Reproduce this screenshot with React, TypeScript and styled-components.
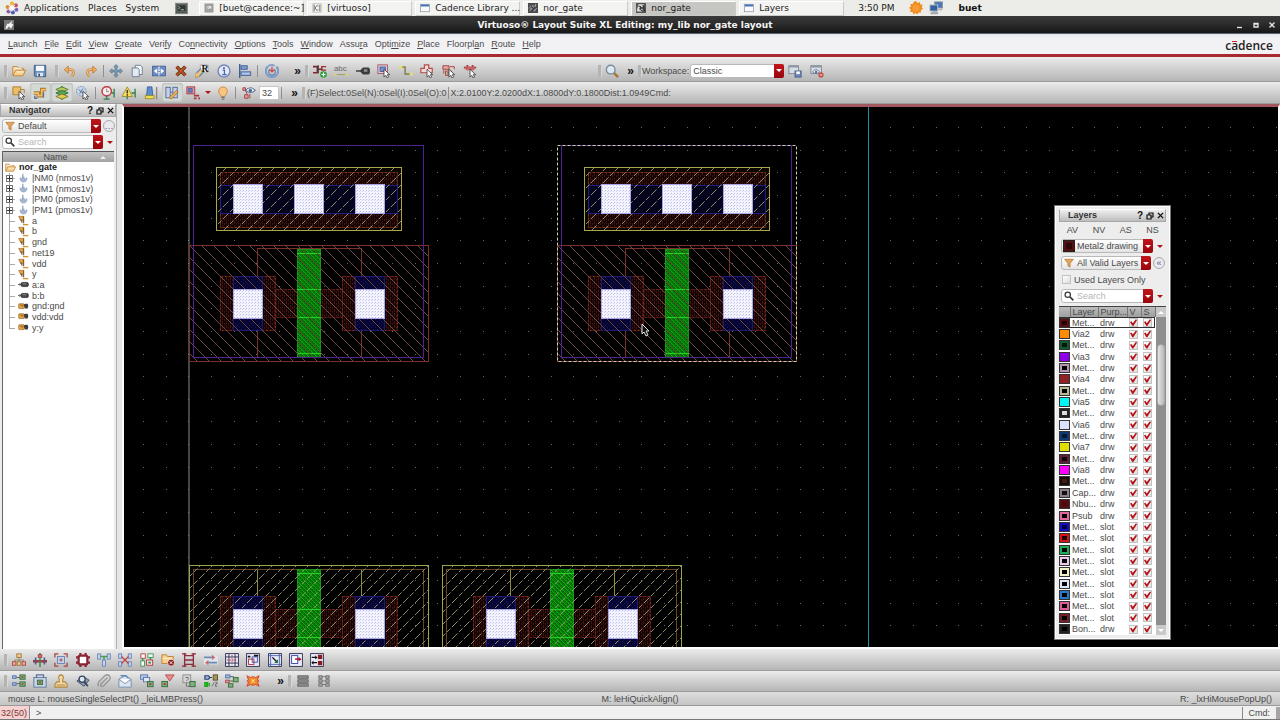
import React from 'react';
import styled, { createGlobalStyle, css } from 'styled-components';

const GlobalStyle = createGlobalStyle`
  * { box-sizing: border-box; }
  body {
    margin: 0;
    background: #e6e6e6;
    color: #4a4a4a;
    font-family: 'Liberation Sans', Arial, sans-serif;
    font-size: 9px;
    line-height: 12px;
    overflow: hidden;
  }
  button, input, select {
    font: inherit;
    color: inherit;
    margin: 0;
    padding: 0;
    border: 0;
    background: none;
  }
`;

/* ---------- icons, drawn on a 16 x 16 grid ---------- */

const chip = (x: number, y: number, w: number, h: number, fill: string, stroke: string) => (
  <rect x={x} y={y} width={w} height={h} fill={fill} stroke={stroke} strokeWidth={1} />
);
const pointer = <path d="M8 6v9l2-2 1.5 3 1.8-1-1.5-2.8H14.5z" fill="#fff" stroke="#333" strokeWidth={0.9} />;
const frame = chip(0.7, 0.7, 14.6, 14.6, '#e9ecf8', '#26264a');

const icons: Record<string, React.ReactNode> = {
  apps: (
    <>
      <circle cx={8} cy={3} r={2.3} fill="#e3b62e" /><circle cx={12.5} cy={5} r={2.3} fill="#c8556d" />
      <circle cx={13} cy={10} r={2.3} fill="#7a62b8" /><circle cx={9} cy={13} r={2.3} fill="#4a5fb0" />
      <circle cx={4} cy={12} r={2.3} fill="#8c5aa8" /><circle cx={3} cy={7} r={2.3} fill="#dd8a35" />
      <path d="M8 4v8M4 8h8M5 5l6 6M11 5l-6 6" stroke="#fff" strokeWidth={1} />
    </>
  ),
  terminal: (
    <>
      {chip(0.5, 1.5, 15, 13, '#4d5450', '#8a8f8a')}
      {chip(2.5, 3.5, 11, 8, '#2c3531', '#6b736e')}
      <path d="M4 5l2 2-2 2M7 9.5h4" fill="none" stroke="#d5dcd6" />
    </>
  ),
  terminalPale: (
    <>
      {chip(1.5, 1.5, 13, 13, '#a4a6a3', '#888')}
      {chip(3.5, 4.5, 9, 6, '#e6e6e2', '#8f8f8f')}
      <path d="M5 6l2 1.5-2 1.5M8 9.5h3" fill="none" stroke="#777" />
    </>
  ),
  script: (
    <>
      {chip(1.5, 1.5, 13, 13, '#fafafa', '#9a9a9a')}
      <path d="M10.5 5C7 3.5 5.5 6 5.5 8s1.5 4.5 5 3M3.5 3v10M12.5 3v10" fill="none" stroke="#444" strokeWidth={1.2} />
    </>
  ),
  win: (
    <>
      {chip(1, 2, 14, 12, '#f8fafc', '#7f8790')}
      <rect x={1.5} y={2.5} width={13} height={3} fill="#3d72b8" />
    </>
  ),
  gate: (
    <>
      <rect width={16} height={16} fill="#4b4b4b" />
      <path d="M2 13L13 2M3 4l9 9M1 8h5l2-5M9 14l5-6M12 2v4M4 11h5" stroke="#a9a9a9" strokeWidth={1.4} fill="none" />
      <path d="M5 6l4 3-3 4" stroke="#171717" strokeWidth={1.6} fill="none" />
    </>
  ),
  gateLight: (
    <>
      <rect width={16} height={16} fill="#555" />
      <path d="M1 13L4 2h9l-2 4-5 1v3h5l-2 4z" fill="#dcdcdc" />
      <path d="M4 5l4 1-2 4 4 3M11 3l3 10" stroke="#222" strokeWidth={1.5} fill="none" />
    </>
  ),
  sun: (
    <>
      <path d="M8 0l1.8 2.3L12.5 1l.4 2.9 2.8.5-1.200 2.600L16 9l-2.500 1.400.4 2.800h-2.900L9.500 15.500 7.500 13.800 5 15.400 4.200 12.700 1.300 12.500 2 9.700 0 7.800 2.300 6.300 1.600 3.500H4.500L5.300.9z" fill="#f08b1d" />
      <circle cx={8} cy={8} r={4} fill="#f79c33" />
    </>
  ),
  net: (
    <>
      {chip(6.5, 1, 9, 7, '#4a76b5', '#8f96a0')}{chip(1, 4.5, 9, 7, '#33619f', '#c2c8cf')}
      <path d="M2 14.5h8l-1-2H4zM11 10h4" stroke="#8b8f96" fill="#c9ccd1" />
    </>
  ),
  folder: (
    <>
      <path d="M1 13V3h5l1.5 2H13v2" fill="#fbe3b8" stroke="#b97f35" />
      <path d="M1 13.5L4 7h11.5l-3 6.5z" fill="#f9cf8c" stroke="#b97f35" />
      <path d="M4 5h7M5 9h8" stroke="#fff8ea" />
    </>
  ),
  save: (
    <>
      <path d="M1.5 1.5h13v13h-12l-1-1z" fill="#6d92bf" stroke="#38587f" />
      <rect x={3.5} y={2} width={9} height={6} fill="#f5f8fb" /><rect x={4.5} y={10} width={7} height={4} fill="#dfe6ee" />
      <rect x={6} y={11} width={2} height={3} fill="#38587f" />
    </>
  ),
  undo: (
    <>
      <path d="M4 6.5h5c4 0 4 6 0 7" fill="none" stroke="#c07a33" strokeWidth={2.8} />
      <path d="M4 6.5h5c4 0 4 6 0 7" fill="none" stroke="#f5bd7b" strokeWidth={1.4} />
      <path d="M6 2.5v8l-4.5-4z" fill="#f2b069" stroke="#c07a33" />
    </>
  ),
  redo: (
    <>
      <path d="M12 6.5H7c-4 0-4 6 0 7" fill="none" stroke="#c07a33" strokeWidth={2.8} />
      <path d="M12 6.5H7c-4 0-4 6 0 7" fill="none" stroke="#f5bd7b" strokeWidth={1.4} />
      <path d="M10 2.5v8l4.5-4z" fill="#f2b069" stroke="#c07a33" />
    </>
  ),
  move: (
    <path d="M8 .5l2.5 3H9V7h3.500V5.500l3 2.500-3 2.500V9H9v3.500h1.500L8 15.500l-2.500-3H7V9H3.500v1.500L.5 8l3-2.500V7H7V3.500H5.500z" fill="#7f9fb6" stroke="#466a86" strokeWidth={0.7} />
  ),
  copy: (
    <>
      <path d="M6 1.5h6l2 2V12H6z" fill="#f3f6fa" stroke="#66778c" /><path d="M2.5 4.5H9l1.5 2v8h-8z" fill="#e4eaf2" stroke="#66778c" />
    </>
  ),
  stretch: (
    <>
      {chip(0.7, 2.5, 14.6, 11, '#6d8cc0', '#3f5f98')}
      <path d="M2 8l4-3v6zM14 8l-4-3v6z" fill="#fff" /><path d="M8 3v10" stroke="#dbe5f6" strokeWidth={2} strokeDasharray="2 1" />
    </>
  ),
  del: (
    <>
      <path d="M3 3l10 10M13 3L3 13" stroke="#5f240c" strokeWidth={4} /><path d="M3 3l10 10M13 3L3 13" stroke="#c45a22" strokeWidth={1.8} />
    </>
  ),
  prop: (
    <>
      <path d="M6 1h9v9H6z" fill="#f4f4f4" stroke="#aaa" />
      <path d="M0 12l6-6 3 3-5 6H0z" fill="#efc274" stroke="#a47834" strokeWidth={0.7} />
      <path d="M2 10l5-5M5 14l5-5" stroke="#5d8bc0" strokeWidth={1.5} />
      <text x={7.5} y={9.5} fontSize={11} fontWeight={700} fontFamily="Liberation Serif, serif" fill="#111">R</text>
    </>
  ),
  info: (
    <>
      <circle cx={8} cy={8} r={6.8} fill="#e3e9f6" stroke="#7388bb" strokeWidth={1.6} />
      <path d="M6.5 7h2v5M6 12.2h5" stroke="#5066a8" strokeWidth={1.4} fill="none" /><circle cx={8} cy={4.5} r={1.2} fill="#5066a8" />
    </>
  ),
  align: (
    <>
      <path d="M2 0v16" stroke="#32538f" strokeWidth={1.5} />{chip(3.5, 2, 7, 4, '#7f9dcf', '#3a5a99')}{chip(3.5, 9, 11, 4, '#a9c0e4', '#3a5a99')}
    </>
  ),
  spin: (
    <>
      <path d="M3 3a7 7 0 1 0 10 0" fill="none" stroke="#7d9fcb" strokeWidth={2.5} />
      <path d="M3 3a7 7 0 0 1 8-1" fill="none" stroke="#7d9fcb" strokeWidth={2} />
      <path d="M5.5 6a3.800 3.800 0 1 0 5 0" fill="none" stroke="#5a7cb5" strokeWidth={1.3} />
      <path d="M8 3v6M10.5 6.5L8 9 5.5 6.5" fill="none" stroke="#d0423b" strokeWidth={1.4} />
    </>
  ),
  wire: (
    <>
      <path d="M0 3h5v7H0M5 6h6" fill="none" stroke="#7c2a2c" strokeWidth={1.8} />
      <path d="M6 1.5v9" stroke="#444" strokeWidth={1.5} /><path d="M15 3h-5v4h5" fill="none" stroke="#9c3434" strokeWidth={1.6} />
      <circle cx={12} cy={12} r={3.8} fill="#2f9e3e" /><path d="M12 9.8v4.4M9.8 12h4.4" stroke="#fff" strokeWidth={1.3} />
    </>
  ),
  abc: (
    <>
      <text x={0} y={8} fontSize={9} fontFamily="Liberation Sans, sans-serif" fill="#666">abc</text>
      <path d="M0 12h15" stroke="#a09a62" /><path d="M0 11h3v2H0zM13 11h3v2h-3z" fill="#dcd56a" />
    </>
  ),
  pin: (
    <>
      <path d="M0 8h5" stroke="#222" strokeWidth={1.4} /><path d="M4 8l4-4h6q2 0 2 4t-2 4H8z" fill="#3c3c3c" /><rect x={9} y={6} width={4} height={3} fill="#8b8b8b" />
    </>
  ),
  select: (
    <>
      {chip(1, 1, 11, 10, '#c9d0e8', '#b64a50')}{chip(3.5, 3.5, 6, 5, '#7a8fc9', '#44589a')}{pointer}
    </>
  ),
  path: (
    <>
      <path d="M2 3.5h5v8h6" fill="none" stroke="#8c8a5e" strokeWidth={2} /><path d="M0 2h4v3H0zM12 10h4v3h-4z" fill="#e2dc72" />
    </>
  ),
  shape: (
    <>
      <path d="M5 1h5v4h4v5H1V5h4z" fill="#f5d9d9" stroke="#b34a4a" strokeWidth={1.3} />{pointer}
    </>
  ),
  group: (
    <>
      <path d="M1 2h7v4H1zM4 8h7v5H4z" fill="#e7a8a8" stroke="#a43a3a" /><path d="M9 3h5v3M2 7v4" stroke="#a43a3a" fill="none" />
      <rect x={6} y={9} width={3} height={3} fill="#3c9a4a" />{pointer}
    </>
  ),
  cluster: (
    <>
      <path d="M1 4h14M5 1v6M11 1v6" stroke="#a43a3a" strokeWidth={2} /><path d="M3 3h10v4H3z" fill="#c96262" />{pointer}
    </>
  ),
  zoom: (
    <>
      <path d="M10 10l5 5" stroke="#a67a3c" strokeWidth={3} /><circle cx={6.5} cy={6.5} r={5} fill="#dbe9f7" stroke="#7f8b98" strokeWidth={1.6} />
    </>
  ),
  wsSave: (
    <>
      {chip(1, 2, 11, 9, '#d8dde3', '#7b838c')}<rect x={1} y={2} width={11} height={2} fill="#8d98a6" />{chip(8, 8, 7, 7, '#7088b8', '#445c8c')}<rect x={9.5} y={8.5} width={4} height={3} fill="#fff" />
    </>
  ),
  wsDel: (
    <>
      {chip(1, 2, 12, 9, '#d8dde3', '#7b838c')}<rect x={1} y={2} width={12} height={2} fill="#8d98a6" />
      <path d="M3 9q4-5 8 0q-4 4-8 0z" fill="#fff" stroke="#53698e" /><circle cx={7} cy={9} r={1.4} fill="#53698e" />
      <circle cx={12.5} cy={12.5} r={3} fill="#c64a44" /><path d="M11 12.5h3" stroke="#fff" />
    </>
  ),
  pick: (
    <>
      <path d="M1 1h9v9H1z" fill="#eebd66" stroke="#a97a2c" /><path d="M10 4h4v4" fill="none" stroke="#a97a2c" />{pointer}
    </>
  ),
  chain: (
    <>
      <path d="M1 8h5v3h4V4h5" fill="none" stroke="#a9752c" strokeWidth={4} /><path d="M1 8h5v3h4V4h5" fill="none" stroke="#f2bf66" strokeWidth={2} />
      <path d="M2 11v3h3M12 7v6" stroke="#5c6fa0" fill="none" strokeWidth={1.5} />
    </>
  ),
  stack: (
    <>
      <path d="M8 0v16" stroke="#2b7c3a" strokeWidth={1.5} /><path d="M1 4l7-3 7 3-7 3z" fill="#b5c85b" stroke="#51722a" />
      <path d="M1 8l7-3 7 3-7 3z" fill="#58a55c" stroke="#2c6a34" /><path d="M1 12l7-3 7 3-7 3z" fill="#d8ca57" stroke="#7c702a" />
    </>
  ),
  dots: (
    <>
      <circle cx={6} cy={6} r={5.5} fill="#c9d6e8" stroke="#7088ac" strokeDasharray="2 1" /><path d="M3 4l6 5M8 3L4 9" stroke="#4f6c9c" />{pointer}
    </>
  ),
  probe: (
    <>
      <circle cx={6.5} cy={6} r={5.3} fill="#fbeeee" stroke="#bf4348" strokeWidth={1.8} /><path d="M6.5 3v3.5H9" stroke="#777" fill="none" />
      <path d="M15 3v10M12 8h3M6.5 11v4M3 15h7" stroke="#2d8144" strokeWidth={1.5} fill="none" />
    </>
  ),
  warn: (
    <>
      <path d="M6 1l6 11H0z" fill="#f7dd57" stroke="#a08a27" /><path d="M6 4.5v4M6 9.5V11" stroke="#222" strokeWidth={1.4} />
      <path d="M15 3v10M11 8h4M6 12v3" stroke="#2d8144" strokeWidth={1.5} fill="none" />
    </>
  ),
  marker: (
    <>
      <path d="M4 1h5l1 10H3z" fill="#5b8fd0" stroke="#355e96" /><rect x={1.5} y={11} width={10} height={3.5} fill="#f1df55" stroke="#9c8c28" />
      <path d="M14.5 1v14" stroke="#777" strokeWidth={1.2} />
    </>
  ),
  edit: (
    <>
      {chip(1, 1.5, 5, 12, '#c6cfe8', '#4f6299')}{chip(9, 1.5, 5, 12, '#c6cfe8', '#4f6299')}<path d="M6 7h3" stroke="#4f6299" />
      <path d="M5 13l8-8 2 2-8 8z" fill="#efb354" stroke="#8e6420" strokeWidth={0.8} />
    </>
  ),
  part: (
    <>
      {chip(1, 1, 9, 8, '#d99aa0', '#a5373d')}{chip(3, 3, 4, 4, '#6f86c0', '#44589a')}<path d="M9 11h6M9 14h3M14 14h2" stroke="#a5373d" strokeWidth={2} />
    </>
  ),
  bulb: (
    <>
      <path d="M8 1a5 5 0 0 0-3 9l1 2h4l1-2a5 5 0 0 0-3-9z" fill="#f9c583" stroke="#c8873b" /><path d="M6 13h4M6.5 15h3" stroke="#777" strokeWidth={1.3} />
    </>
  ),
  eye: (
    <>
      <path d="M4 5q6-6 11 0q-5 5-11 0z" fill="#fff" stroke="#5a6f96" strokeWidth={1.2} /><circle cx={9.5} cy={5} r={2} fill="#4a6a9c" />
      <path d="M1 2h3v3H1zM3 10h4v4H3z" fill="#e3a1a1" stroke="#a43a3a" /><path d="M4 5l2 5M9 9v5" stroke="#a43a3a" />
    </>
  ),
  filter: <path d="M1 2h14L9.800 8.500V14.500L6.200 12.500V8.500z" fill="#e6a45c" stroke="#a76d2d" />,
  search: (
    <>
      <circle cx={6} cy={6} r={4.3} fill="none" stroke="#3a3a3a" strokeWidth={2} /><path d="M9.5 9.5L15 15" stroke="#3a3a3a" strokeWidth={2.6} />
    </>
  ),
  inst: (
    <>
      <path d="M7 1v6" stroke="#8095b5" strokeWidth={1.6} /><path d="M3 7q0 6 5 6t5-6q-2 2-4 2V6H6v3q-2 0-3-2z" fill="#a9bbd4" stroke="#8095b5" />
    </>
  ),
  netItem: (
    <>
      <path d="M1 2h7v6H4z" fill="#e8a748" stroke="#9c6820" /><path d="M8 2v10" stroke="#8c5f23" strokeWidth={2} /><path d="M4 6l2 5" stroke="#555" strokeWidth={1.5} />
      <path d="M7 14h8" stroke="#c79a3c" strokeWidth={2} />
    </>
  ),
  pinItem: (
    <>
      <path d="M0 8h4M2 6l2 2-2 2" stroke="#333" fill="none" /><rect x={4.5} y={5} width={10.5} height={6} rx={2} fill="#4a4a4a" stroke="#222" /><path d="M7 7h5" stroke="#999" />
    </>
  ),
  pinNet: (
    <>
      <rect x={1} y={4} width={8} height={7} rx={1} fill="#e8a748" stroke="#9c6820" /><path d="M3 6h3v3" stroke="#7a4f18" fill="none" />
      <path d="M8 5l3-1h3q2 3 0 7h-4z" fill="#3c3c3c" />
    </>
  ),
  tree: (
    <>
      <path d="M8 4v4M3 12V8h10v4M8 8v4" stroke="#8a8063" fill="none" />{chip(5.5, 1, 5, 4, '#f0cf97', '#a06f32')}
      {chip(0.5, 10, 4, 4, '#f0a8a0', '#a14a3f')}{chip(6, 10, 4, 4, '#f0cf97', '#a06f32')}{chip(11.5, 10, 4, 4, '#f0a8a0', '#a14a3f')}
    </>
  ),
  rail: (
    <>
      <path d="M0 9.5h16" stroke="#a8353c" strokeWidth={3} /><path d="M8 0v16" stroke="#3b8f4c" strokeWidth={1.8} /><path d="M3 5v8M13 5v8" stroke="#465b9e" strokeWidth={1.8} />{chip(6, 2, 4, 3, '#dc7a7a', '#a8353c')}
    </>
  ),
  target: (
    <>
      <path d="M1 5V1h4M11 1h4v4M15 11v4h-4M5 15H1v-4" fill="none" stroke="#a8454a" strokeWidth={1.5} />{chip(4, 4, 8, 8, '#c4d3ea', '#6480b5')}<path d="M6 8h4M8 6v4" stroke="#a8454a" />
    </>
  ),
  ring: (
    <>
      <rect x={3} y={3} width={10} height={10} rx={2} fill="#fff" stroke="#8d2436" strokeWidth={2.6} />
      <path d="M5 0v3M11 0v3M5 13v3M11 13v3M0 5h3M0 11h3M13 5h3M13 11h3" stroke="#8d2436" strokeWidth={2.5} />
    </>
  ),
  branch: (
    <>
      {chip(0.7, 1, 3.5, 6, '#c3d4ee', '#6883b4')}{chip(11.7, 1, 3.5, 6, '#c3d4ee', '#6883b4')}<path d="M4 4h8M8 4v4" stroke="#4a9a5a" strokeWidth={1.8} />{chip(6.2, 8, 3.5, 7, '#c3d4ee', '#6883b4')}
    </>
  ),
  cross: (
    <>
      {chip(0.7, 1, 3.5, 5, '#c3d4ee', '#6883b4')}{chip(11.7, 1, 3.5, 5, '#c3d4ee', '#6883b4')}{chip(0.7, 10, 3.5, 5, '#c3d4ee', '#6883b4')}{chip(11.7, 10, 3.5, 5, '#c3d4ee', '#6883b4')}
      <path d="M4 4l8 8M12 4l-8 8" stroke="#b8474a" strokeWidth={1.5} />
    </>
  ),
  blocks: (
    <>
      {chip(1, 1, 5, 5, '#fff', '#b3363c')}{chip(9, 1, 6, 4, '#fff', '#31904a')}{chip(1, 9, 4, 6, '#fff', '#31904a')}{chip(7.5, 8, 7, 6, '#f6dcdc', '#b3363c')}
      <path d="M3 6v3M12 5v3" stroke="#31904a" strokeWidth={1.5} /><rect x={9.5} y={10} width={3} height={2} fill="#31904a" />
    </>
  ),
  folderX: (
    <>
      <path d="M1 12V2h5l1.5 2H14v8z" fill="#f7cf8a" stroke="#b97f35" /><path d="M2 6h11" stroke="#fff3dc" />
      <circle cx={11.5} cy={11} r={4} fill="#8f1f1f" stroke="#fff" strokeWidth={0.8} /><path d="M10 9.5l3 3M13 9.5l-3 3" stroke="#fff" />
    </>
  ),
  ladder: <path d="M3 0v16M13 0v16M3 3h10M3 8h10M3 13h10M0 1h5M11 1h5M0 15h5M11 15h5" stroke="#8e2d3c" strokeWidth={1.5} fill="none" />,
  flow: (
    <>
      <rect y={3} width={16} height={10} fill="#dfe5ee" /><path d="M0 5h9M4 11h11" stroke="#6d88b0" strokeWidth={2} /><path d="M9 2l4 3-4 3zM5 8l-4 3 4 3z" fill="#cf6c6c" />
    </>
  ),
  fCross: (<>{frame}<path d="M1 4.5h14M1 11.5h14M4.5 1v14M11.5 1v14" stroke="#26264a" /><path d="M2 8h12M8 2v12" stroke="#b8383f" strokeDasharray="2 1" /></>),
  fShift: (<>{frame}{chip(3, 7, 6, 6, '#fff', '#a71d2d')}{chip(7, 4.5, 6, 6, 'none', '#3847a8')}<path d="M9 3h5M2 4h3" stroke="#111" strokeWidth={2} /></>),
  fDiag: (<>{frame}<path d="M3 1v14M13 1v14M1 3h14M1 13h14" stroke="#4a5bb8" /><path d="M5 5l5 5" stroke="#111" strokeWidth={1.6} /><path d="M11.5 7v4.5H7z" fill="#177a2f" /></>),
  fOut: (<>{frame}{chip(3, 3, 7, 9, '#fff', '#2b3ba8')}<path d="M7 7h5" stroke="#a71d2d" strokeWidth={1.8} /><path d="M11 4.5L14.5 7 11 9.500z" fill="#a71d2d" /></>),
  fSwap: (<>{frame}<rect x={9} y={2} width={5} height={5} fill="#8b1a20" /><rect x={9} y={9} width={5} height={5} fill="#8b1a20" /><path d="M2 5h5M3 11h5" stroke="#111" strokeWidth={1.6} /><path d="M6 2.5L8.5 5 6 7.5zM4 8.5L1.5 11 4 13.5z" fill="#111" /></>),
  links: (
    <>
      <path d="M5 4h7M5 11h7" stroke="#555" />{chip(0.7, 2, 4, 3, '#9fb6dc', '#5472a8')}{chip(0.7, 10, 4, 3, '#9fb6dc', '#5472a8')}
      {chip(9, 1, 6, 5, '#7eb07e', '#356b39')}{chip(9, 9, 6, 5, '#7eb07e', '#356b39')}<path d="M11 3.5h2M11 11.5h2" stroke="#b3363c" strokeWidth={2} />
    </>
  ),
  board: (
    <>
      {chip(1, 4, 14, 11, '#c9d6ea', '#5c739b')}<path d="M4 4V1h8v3" fill="none" stroke="#5c739b" strokeWidth={1.5} />{chip(5, 7, 6, 5, '#74a974', '#356b39')}<path d="M7 9.5h2" stroke="#b3363c" strokeWidth={2} />
    </>
  ),
  stamp: <path d="M8 1a3 3 0 0 0-2 5v3H3l-2 3v3h14v-3l-2-3h-3V6a3 3 0 0 0-2-5zM3 12.5h10" fill="#f3d8a6" stroke="#b0843d" strokeWidth={1.2} />,
  find: (
    <>
      <path d="M1 8l7-5 7 4-6 7z" fill="#8d9bb3" stroke="#3d4a63" /><circle cx={7} cy={6} r={3.5} fill="#dbe6f3" stroke="#39475f" strokeWidth={1.5} /><path d="M9.5 9l4 5" stroke="#39475f" strokeWidth={2.2} />
    </>
  ),
  clip: <path d="M12 4L5 11q-2 2 0 3 1.5 1 3-1l6-6q2-3 0-5t-5 0L3 8q-3 3-1 6" fill="none" stroke="#9a9a9a" strokeWidth={1.7} />,
  mail: (
    <>
      <path d="M1 6l7-4 7 4v9H1z" fill="#dce6f3" stroke="#7288a8" /><path d="M1 6l7 5 7-5" fill="#fff" stroke="#7288a8" /><path d="M3 2h6l3 3" stroke="#5d88bb" fill="none" strokeWidth={1.6} />
    </>
  ),
  pair: (<>{chip(0.7, 1, 8, 5, '#b9c9e4', '#5472a8')}{chip(4, 4, 7, 5, '#dfe7f4', '#5472a8')}{chip(8.5, 8.5, 6.5, 6, '#7eb07e', '#356b39')}<path d="M10.5 11.5h2.5" stroke="#b3363c" strokeWidth={2} /></>),
  tri: (<><path d="M5 1h10l-5 7z" fill="#e88c90" stroke="#b8474a" />{chip(1, 8.5, 6.5, 6, '#7eb07e', '#356b39')}<path d="M3 11.5h2.5" stroke="#b3363c" strokeWidth={2} /></>),
  note: (<>{chip(1, 1, 9, 9, '#d3d3d3', '#8a8a8a')}<path d="M4 4h3v2L5 8" stroke="#666" fill="none" /><path d="M5 10v4h4" stroke="#666" fill="none" />{chip(9, 8.5, 6, 6, '#7eb07e', '#356b39')}</>),
  quad: (<><path d="M1 2h4l2 2-2 2H1zM7 4h2" fill="#9bb3dd" stroke="#2c3f74" strokeWidth={1.3} />{chip(10.5, 1, 5, 6, '#a09a5a', '#5d4a22')}<path d="M1 10h3v4H1zM6 10v4" fill="#22d022" stroke="#18a818" strokeWidth={1.5} /><path d="M9 14l3-5M13 9.5h2v2h-2V14h2" stroke="#666" fill="none" /></>),
  map: (<><path d="M4 3h6M4 8h7M4 13h5" stroke="#555" />{chip(0.7, 1, 5, 3.5, '#9fb6dc', '#5472a8')}{chip(0.7, 7, 4, 3, '#e09a9a', '#a8454a')}{chip(9.5, 4, 5.5, 5, '#7eb07e', '#356b39')}{chip(4, 11, 5, 4, '#7eb07e', '#356b39')}</>),
  burst: (
    <>
      <path d="M1 2l4 2 3-1 3 1 4-2-2 5 2 1-2 1 2 5-4-2-3 1-3-1-4 2 2-5-2-1 2-1z" fill="#f08a2a" stroke="#d0402a" />
      <path d="M6 6l4 4M10 6l-4 4" stroke="#fbe08a" strokeWidth={1.2} />
    </>
  ),
  db: <path d="M2 2h12v3H2zM2 6.500h12v3H2zM2 11h12v3H2z" fill="#8b8b8b" stroke="#666" />,
  grid: <path d="M2 2h4v3H2zM10 2h4v3h-4zM2 6.500h4v3H2zM10 6.500h4v3h-4zM2 11h4v3H2zM10 11h4v3h-4zM6 3h4M6 8h4M6 12h4" fill="#a9a9a9" stroke="#6f6f6f" />,
  tool: (<><rect width={16} height={16} fill="#777" /><path d="M2 14l3-8h3l5-5-1 5 3 1-4 7-3-4-3 4z" fill="#f2f2f2" /></>),
};

const Svg = styled.svg`
  display: block;
  flex: none;
`;
const Icon = ({ name, size = 14 }: { name: string; size?: number }) => (
  <Svg width={size} height={size} viewBox="0 0 16 16" aria-hidden="true">
    {icons[name]}
  </Svg>
);

/* ---------- desktop panel and window title ---------- */

const Page = styled.div`
  min-height: 100vh;
  display: flex;
  flex-direction: column;
`;
const DeskPanel = styled.header`
  height: 16px;
  display: flex;
  align-items: center;
  background: #ecece8;
  color: #222;
  font-family: 'DejaVu Sans', sans-serif;
`;
const DeskMenu = styled.button`
  display: flex;
  align-items: center;
  gap: 5px;
  padding: 0 4px 0 5px;
  white-space: nowrap;
`;
const Launcher = styled.button`
  width: 36px;
  display: flex;
  justify-content: center;
`;
const Tasks = styled.nav`
  display: flex;
  gap: 3px;
`;
const Task = styled.button<{ $active?: boolean }>`
  width: 105px;
  height: 15px;
  display: flex;
  align-items: center;
  gap: 5px;
  padding-left: 4px;
  white-space: nowrap;
  border: 1px solid #c9c9c6;
  border-top-color: #fff;
  border-left-color: #fff;
  background: ${p => (p.$active ? '#c6c6c3' : '#f3f3f1')};
`;
const Clock = styled.time`
  padding: 0 15px 0 14px;
`;
const User = styled.strong`
  padding-left: 15px;
  color: #111;
`;
const Tray = styled.div`
  display: flex;
  gap: 6px;
`;

const TitleBar = styled.div`
  height: 18px;
  display: grid;
  grid-template-columns: 60px 1fr 60px;
  align-items: center;
  padding: 0 4px;
  background: linear-gradient(#3a3a3a, #2b2b2b 50%, #161616);
  border-bottom: 1px solid #5b6770;
  color: #f5f5f5;
`;
const Title = styled.h1`
  margin: 0;
  padding-right: 30px;
  text-align: center;
  font: bold 9px/14px 'DejaVu Sans', sans-serif;
`;
const WinButtons = styled.div`
  display: flex;
  justify-content: flex-end;
  gap: 8px;
`;
const WinButton = styled.button`
  display: flex;
`;

/* ---------- application menu ---------- */

const MenuBar = styled.nav`
  height: 23px;
  display: flex;
  align-items: center;
  gap: 7px;
  padding: 0 7px 0 8px;
  background: linear-gradient(#e4e8ec, #f2f2f5 4px);
  border-bottom: 3px solid #a82a30;
`;
const MenuItem = styled.button`
  white-space: nowrap;
  u { text-underline-offset: 1px; }
`;
const Logo = styled.span`
  margin-left: auto;
  padding-top: 3px;
  font: 600 12px/16px 'Open Sans', sans-serif;
  color: #222;
`;
const LogoBar = styled.span`
  position: relative;
  &::after {
    content: '';
    position: absolute;
    left: 1px;
    top: 4px;
    width: 5px;
    height: 1px;
    background: #d4213a;
  }
`;

/* ---------- toolbars ---------- */

const Bar = styled.div<{ $h: number; $drop?: boolean }>`
  height: ${p => p.$h}px;
  padding-top: ${p => (p.$drop ? 3 : 0)}px;
  display: flex;
  align-items: center;
  background: linear-gradient(#ececec, #d8d8d8 35%, #b6b6b6);
  border-bottom: 1px solid #9c9c9c;
`;
const Handle = styled.span`
  flex: none;
  width: 4px;
  height: 12px;
  margin-left: 4px;
  background: #b4b4b4;
  border-right: 1px solid #d9d9d9;
`;
const Group = styled.div<{ $w: number }>`
  flex: none;
  width: ${p => p.$w}px;
  display: flex;
  align-items: center;
`;
const ToolButton = styled.button<{ $on?: boolean }>`
  flex: 1;
  height: 19px;
  min-width: 0;
  display: flex;
  align-items: center;
  justify-content: center;
  ${p => p.$on && css`
    background: #d3d9d4;
    border-radius: 3px;
    box-shadow: inset 0 0 2px #999;
  `}
`;
const Sep = styled.span<{ $m?: number }>`
  flex: none;
  width: 1px;
  height: 12px;
  margin: 0 ${p => p.$m ?? 1}px;
  background: #8f8f8f;
`;
const More = styled.button<{ $w?: number }>`
  flex: none;
  width: ${p => p.$w ?? 16}px;
  text-align: right;
  color: #111;
  font: bold 12px/12px 'Liberation Sans', sans-serif;
`;
const Caret = styled.span`
  flex: none;
  border: 3px solid transparent;
  border-top-color: #b01218;
  border-bottom: 0;
`;
const CaretButton = styled.button`
  flex: none;
  width: 10px;
  display: flex;
  justify-content: center;
`;
const Spacer = styled.span<{ $w: number }>`
  flex: none;
  width: ${p => p.$w}px;
`;
const CountInput = styled.input`
  width: 20px;
  height: 14px;
  padding-left: 2px;
  background: #fff;
  border: 1px solid #c6c6c6;
`;
const Readout = styled.output`
  white-space: nowrap;
  margin-left: 1px;
`;

const Tools = ({ names, width, on = [] }: { names: string[]; width: number; on?: string[] }) => (
  <Group $w={width}>
    {names.map(n => (
      <ToolButton key={n} $on={on.includes(n)} aria-label={n}>
        <Icon name={n} />
      </ToolButton>
    ))}
  </Group>
);

/* ---------- fields ---------- */

const Field = styled.div<{ $w?: number; $plain?: boolean }>`
  flex: ${p => (p.$w ? 'none' : 1)};
  ${p => p.$w && css`width: ${p.$w}px;`}
  min-width: 0;
  height: 14px;
  display: flex;
  align-items: center;
  gap: 3px;
  padding-left: 2px;
  background: ${p => (p.$plain ? '#fff' : 'linear-gradient(#fff, #e4e4e4)')};
  border: 1px solid #b9b9b9;
  border-radius: 3px;
`;
const FieldSelect = styled.select`
  appearance: none;
  flex: 1;
  min-width: 0;
  outline: none;
  white-space: nowrap;
`;
const FieldInput = styled.input`
  flex: 1;
  min-width: 0;
  outline: none;
  &::placeholder { color: #b5b5b5; opacity: 1; }
`;
const Drop = styled.span`
  flex: none;
  align-self: stretch;
  width: 10px;
  margin: -1px;
  display: flex;
  align-items: center;
  justify-content: center;
  pointer-events: none;
  background: linear-gradient(#c3141b, #97060c);
  border-radius: 0 2px 2px 0;
  &::after {
    content: '';
    border: 3px solid transparent;
    border-top-color: #fff;
    border-bottom: 0;
  }
`;
const RoundButton = styled.button`
  flex: none;
  width: 12px;
  height: 12px;
  display: flex;
  align-items: center;
  justify-content: center;
  border: 1px solid #a9a9a9;
  border-radius: 6px;
  background: #e9e9ee;
  line-height: 8px;
  color: #56688c;
`;
const FieldRow = styled.div`
  display: flex;
  align-items: center;
  gap: 2px;
  padding: 0 1px 0 2px;
`;
const Select = ({ label, value, icon, w }: { label: string; value: string; icon?: React.ReactNode; w?: number }) => (
  <Field $w={w} $plain={!icon}>
    {icon}
    <FieldSelect aria-label={label} defaultValue={value}>
      <option>{value}</option>
    </FieldSelect>
    <Drop />
  </Field>
);
const Search = () => (
  <Field $plain>
    <Icon name="search" size={10} />
    <FieldInput type="search" aria-label="Search" placeholder="Search" />
    <Drop />
  </Field>
);

/* ---------- dock title ---------- */

const DockBar = styled.div`
  height: 13px;
  display: flex;
  align-items: center;
  padding: 0 0 0 8px;
  background: linear-gradient(#efefef, #bdbdbd);
  border: 1px solid #a8a8a8;
  border-top-color: #fff;
`;
const DockTitle = styled.h2`
  flex: 1;
  margin: 0;
  font-size: 9px;
  line-height: 11px;
  color: #333;
`;
const DockButton = styled.button`
  width: 10px;
  height: 10px;
  display: flex;
  align-items: center;
  justify-content: center;
  color: #111;
  font: bold 10px/10px 'Liberation Sans', sans-serif;
`;
const Dock = ({ title }: { title: string }) => (
  <DockBar>
    <DockTitle>{title}</DockTitle>
    <DockButton aria-label="Help">?</DockButton>
    <DockButton aria-label="Float">
      <Svg width={8} height={8} viewBox="0 0 8 8"><path d="M3 3V1h4v4H5M1 3h4v4H1z" fill="none" stroke="#111" strokeWidth={1.2} /></Svg>
    </DockButton>
    <DockButton aria-label="Close">
      <Svg width={7} height={7} viewBox="0 0 8 8"><path d="M1 1l6 6M7 1L1 7" stroke="#111" strokeWidth={1.6} /></Svg>
    </DockButton>
  </DockBar>
);

/* ---------- navigator ---------- */

const Main = styled.main`
  flex: 1;
  min-height: 0;
  display: flex;
`;
const NavPanel = styled.aside`
  width: 117px;
  flex: none;
  display: flex;
  flex-direction: column;
  gap: 2px;
  background: #ececec;
  border-right: 1px solid #b3b3b3;
`;
const NameHead = styled.div`
  height: 11px;
  display: grid;
  grid-template-columns: 1fr 14px;
  align-items: center;
  padding-left: 8px;
  line-height: 10px;
  text-align: center;
  background: linear-gradient(#c4c4c4, #a2a2a2);
  border-top: 1px solid #555;
`;
const UpMark = styled.span`
  width: 6px;
  border: 3px solid transparent;
  border-bottom-color: #eee;
  border-top: 0;
`;
const TreeBox = styled.div`
  flex: 1;
  margin: 0 2px;
  background: #fff;
  border-left: 1px solid #666;
`;
const TreeList = styled.ul`
  height: 171px;
  margin: 0;
  padding: 0;
  list-style: none;
  display: flex;
  flex-direction: column;
`;
const TreeItem = styled.li<{ $root?: boolean }>`
  flex: 1;
  min-height: 0;
  display: flex;
  align-items: center;
  gap: 3px;
  line-height: 10px;
  white-space: nowrap;
  padding-left: 2px;
  ${p => p.$root && css`font-weight: bold; color: #222;`}
`;
const Twig = styled.span<{ $last?: boolean }>`
  position: relative;
  flex: none;
  width: 10px;
  align-self: stretch;
  &::before {
    content: '';
    position: absolute;
    left: 4px;
    top: 0;
    height: ${p => (p.$last ? '50%' : '100%')};
    border-left: 1px solid #aaa;
  }
  &::after {
    content: '';
    position: absolute;
    left: 4px;
    top: 50%;
    width: 6px;
    border-top: 1px solid #aaa;
  }
`;
const Expander = styled.button`
  position: absolute;
  z-index: 1;
  left: 1px;
  top: 2px;
  width: 7px;
  height: 7px;
  background:
    linear-gradient(#333, #333) center / 5px 1px no-repeat,
    linear-gradient(#333, #333) center / 1px 5px no-repeat,
    #fff;
  border: 1px solid #777;
`;

const treeRows: [string, string][] = [
  ['inst', '|NM0 (nmos1v)'], ['inst', '|NM1 (nmos1v)'], ['inst', '|PM0 (pmos1v)'], ['inst', '|PM1 (pmos1v)'],
  ['netItem', 'a'], ['netItem', 'b'], ['netItem', 'gnd'], ['netItem', 'net19'], ['netItem', 'vdd'], ['netItem', 'y'],
  ['pinItem', 'a:a'], ['pinItem', 'b:b'], ['pinNet', 'gnd:gnd'], ['pinNet', 'vdd:vdd'], ['pinNet', 'y:y'],
];

const Navigator = () => (
  <NavPanel>
    <Dock title="Navigator" />
    <FieldRow>
      <Select label="Navigator filter" value="Default" icon={<Icon name="filter" size={10} />} />
      <RoundButton aria-label="More options">…</RoundButton>
    </FieldRow>
    <FieldRow>
      <Search />
      <CaretButton aria-label="Search options"><Caret /></CaretButton>
    </FieldRow>
    <TreeBox>
      <NameHead>Name<UpMark /></NameHead>
      <TreeList>
        <TreeItem $root><Icon name="folder" size={11} />nor_gate</TreeItem>
        {treeRows.map(([icon, name], i) => (
          <TreeItem key={name}>
            <Twig $last={i === treeRows.length - 1}>
              {icon === 'inst' && <Expander aria-label={`Expand ${name}`} />}
            </Twig>
            <Icon name={icon} size={11} />
            {name}
          </TreeItem>
        ))}
      </TreeList>
    </TreeBox>
  </NavPanel>
);

/* ---------- layout canvas ---------- */

const CanvasFrame = styled.section`
  position: relative;
  flex: 1;
  min-width: 0;
  margin-left: 5px;
  background: #000;
  border: 2px solid #fff;
  border-top: 3px solid #a2585e;
`;
const Drawing = styled.svg`
  position: absolute;
  inset: 0;
  width: 100%;
  height: 100%;
`;

const Contact = ({ x, y }: { x: number; y: number }) => (
  <rect x={x} y={y} width={29} height={29} fill="url(#contact)" stroke="#a9a4e6" />
);

const Diffusion = ({ x }: { x: number }) => (
  <>
    <rect x={x} y={31.5} width={55} height={54} fill="url(#metal)" stroke="#7c201c" strokeDasharray="3 1" />
    <rect x={x + 13} y={31.5} width={29} height={54} fill="url(#blue)" stroke="#1b1a70" />
  </>
);

/* Gate finger, both diffusions and their contacts; `well` is the hatched implant laid over them. */
const Device = ({ well }: { well: React.ReactNode }) => (
  <>
    <rect x={86.5} y={44.5} width={68} height={28} fill="url(#metal)" stroke="#6c1f1b" strokeDasharray="3 1" />
    <Diffusion x={31.5} />
    <Diffusion x={153.5} />
    <rect x={108.5} y={4.5} width={23} height={108} fill="url(#gate)" stroke="#119a1a" />
    <path d="M108 8.5h24M108 44.5h24M108 72.5h24M108 108.5h24" stroke="#25d025" />
    {well}
    <Contact x={44.5} y={44.5} />
    <Contact x={166.5} y={44.5} />
  </>
);

const Pmos = ({ selected }: { selected?: boolean }) => (
  <>
    <rect x={27.5} y={22.5} width={185} height={63} fill="#0a0400" />
    <rect x={31.5} y={27.5} width={177} height={55} fill="url(#metal)" stroke="#7c3218" strokeDasharray="3 1" />
    <rect x={31.5} y={40.5} width={177} height={28} fill="#04041c" stroke="#1d1d86" />
    <rect x={27.5} y={22.5} width={185} height={63} fill="url(#slash)" stroke="#a8a848" />
    {[44.5, 105.5, 166.5].map(x => <Contact key={x} x={x} y={39.5} />)}
    <g transform="translate(0 100)">
      <rect x={68.5} y={3.5} width={104} height={109} fill="none" stroke="#7a3028" />
      <Device well={<rect x={0.5} y={0.5} width={239} height={116} fill="url(#backslash)" stroke="#7c2f2c" />} />
    </g>
    <rect x={4.5} y={0.5} width={230} height={212} fill="none" stroke="#4c2390" />
    {selected && <rect x={0.5} y={0.5} width={239} height={216} fill="none" stroke="#d4cdb0" strokeDasharray="3 2" />}
  </>
);

const Nmos = () => (
  <>
    <rect x={4.5} y={4.5} width={230} height={120} fill="none" stroke="#6a4526" />
    <path d="M68.5 5v100M172.5 5v100" stroke="#8f8f3c" />
    <Device well={<rect x={0.5} y={0.5} width={239} height={120} fill="url(#slash)" stroke="#9aa44a" />} />
  </>
);

const dots: string = Array.from({ length: 24 }, (_, r) =>
  Array.from({ length: 51 }, (_, c) => `M${Math.round(19 + c * 22.65)} ${Math.round(20 + r * 22.65) + 0.5}h1`).join('')
).join('');

const Canvas = () => (
  <Drawing role="img" aria-label="nor_gate layout">
    <defs>
      <pattern id="slash" width="12" height="12" patternUnits="userSpaceOnUse">
        <path d="M0 12L12 0" stroke="#8e8c68" strokeWidth="1" strokeDasharray="5 2" />
      </pattern>
      <pattern id="backslash" width="12" height="12" patternUnits="userSpaceOnUse">
        <path d="M0 0L12 12" stroke="#6b4a44" strokeWidth="1" />
      </pattern>
      <pattern id="metal" width="4" height="4" patternUnits="userSpaceOnUse">
        <rect width="4" height="4" fill="#100302" /><path d="M1.5 0v3M3.5 2v2" stroke="#421310" />
      </pattern>
      <pattern id="blue" width="4" height="4" patternUnits="userSpaceOnUse">
        <rect width="4" height="4" fill="#050430" /><path d="M0 .5h1M2 2.5h1" stroke="#16146a" />
      </pattern>
      <pattern id="gate" width="4" height="4" patternUnits="userSpaceOnUse">
        <rect width="4" height="4" fill="#067a06" /><path d="M0 0l4 4" stroke="#16a516" /><path d="M3 .5h1M1 2.5h1" stroke="#045004" />
      </pattern>
      <pattern id="contact" width="3" height="3" patternUnits="userSpaceOnUse">
        <rect width="3" height="3" fill="#f3f4ff" /><rect width="1" height="1" fill="#b9bce0" /><rect x="2" y="1" width="1" height="1" fill="#d2d4ee" />
      </pattern>
    </defs>
    <path d={dots} stroke="#686868" />
    <path d="M65 0v1000" stroke="#8a8a8a" />
    <path d="M744.5 0v1000" stroke="#1f8fa2" />
    <g transform="translate(65 38)"><Pmos /></g>
    <g transform="translate(433 38)"><Pmos selected /></g>
    <g transform="translate(65 458)"><Nmos /></g>
    <g transform="translate(318 458)"><Nmos /></g>
    <path d="M518 217v10l2-2 2 4 2-1-2-4h3z" fill="#111" stroke="#e6e6e6" />
  </Drawing>
);

/* ---------- layers window ---------- */

const LayerWindow = styled.section`
  position: absolute;
  right: 108px;
  top: 99px;
  width: 115px;
  padding: 2px 3px 3px;
  display: flex;
  flex-direction: column;
  gap: 3px;
  background: #ededed;
  border: 1px solid #fff;
  outline: 1px solid #777;
`;
const LayerModes = styled.div`
  display: grid;
  grid-template-columns: repeat(4, 1fr);
  height: 11px;
`;
const ModeButton = styled.button`
  line-height: 11px;
`;
const CheckLabel = styled.label`
  height: 13px;
  display: flex;
  align-items: center;
  gap: 3px;
  padding-left: 3px;
`;
const Check = styled.input`
  appearance: none;
  flex: none;
  display: block;
  position: relative;
  width: 9px;
  height: 9px;
  background: linear-gradient(135deg, #fff, #ddd);
  border: 1px solid #c2c2c2;
  &:checked::before {
    content: '';
    position: absolute;
    inset: 0;
    background: #b31217;
    clip-path: polygon(0 40%, 20% 30%, 40% 58%, 85% 0, 100% 14%, 45% 100%, 30% 92%);
  }
`;
const LayerBody = styled.div`
  display: flex;
  border-top: 1px solid #444;
`;
const LayerTable = styled.table`
  width: 96px;
  height: 328px;
  border-collapse: collapse;
  table-layout: fixed;
  background: #fff;
  line-height: 10px;
  th, td { padding: 0 0 0 2px; font-weight: normal; text-align: left; white-space: nowrap; }
  th { height: 10px; background: linear-gradient(#bcbcbc, #9e9e9e); border-right: 1px solid #777; }
  td:first-child { padding-left: 0; }
`;
const Column = styled.col<{ $w: number }>`
  width: ${p => p.$w}px;
`;
const LayerRow = styled.tr<{ $current?: boolean }>`
  ${p => p.$current && css`outline: 1px solid #333; outline-offset: -1px;`}
`;
const Swatch = styled.span<{ $edge: string; $core: string }>`
  display: block;
  width: 11px;
  height: 10px;
  background: ${p => p.$core};
  border: ${p => (p.$edge === p.$core ? 1 : 3)}px solid ${p => p.$edge};
  outline: 1px solid #333;
  outline-offset: -1px;
`;
const ScrollTrack = styled.div`
  width: 11px;
  display: flex;
  flex-direction: column;
  background: #8f8f8f;
`;
const ScrollButton = styled.button<{ $down?: boolean }>`
  height: 10px;
  display: flex;
  align-items: center;
  justify-content: center;
  background: #c9c9c9;
  &::after {
    content: '';
    border: 3px solid transparent;
    ${p => (p.$down ? 'border-top-color: #fff; border-bottom: 0;' : 'border-bottom-color: #fff; border-top: 0;')}
  }
`;
const ScrollThumb = styled.span`
  height: 62px;
  margin: 27px 1px auto;
  border-radius: 4px;
  border: 1px solid #a9a9a9;
  background: linear-gradient(90deg, #e3e3e3, #b9b9b9);
`;

const layers: [string, string, string, string][] = [
  ['Met...', 'drw', '#5a0f12', '#220404'], ['Via2', 'drw', '#ff8c00', '#ff8c00'], ['Met...', 'drw', '#0f5a30', '#04180c'],
  ['Via3', 'drw', '#8e00e8', '#8e00e8'], ['Met...', 'drw', '#b796b4', '#000'], ['Via4', 'drw', '#8f2224', '#8f2224'],
  ['Met...', 'drw', '#b9b795', '#000'], ['Via5', 'drw', '#00f5f5', '#00f5f5'], ['Met...', 'drw', '#222', '#ddd'],
  ['Via6', 'drw', '#d9e3ff', '#d9e3ff'], ['Met...', 'drw', '#0f3a70', '#041630'], ['Via7', 'drw', '#dede00', '#dede00'],
  ['Met...', 'drw', '#5c2038', '#14040c'], ['Via8', 'drw', '#ff00ff', '#ff00ff'], ['Met...', 'drw', '#1c0c08', '#3c1c16'],
  ['Cap...', 'drw', '#8d7f8a', '#111'], ['Nbu...', 'drw', '#5a0d10', '#4c0a0c'], ['Psub', 'drw', '#e266a0', '#000'],
  ['Met...', 'slot', '#1010c0', '#000040'], ['Met...', 'slot', '#d41616', '#200'], ['Met...', 'slot', '#1fae58', '#000'],
  ['Met...', 'slot', '#ecc9ea', '#000'], ['Met...', 'slot', '#f3f1c6', '#000'], ['Met...', 'slot', '#dbe8f8', '#000'],
  ['Met...', 'slot', '#2a78cc', '#000'], ['Met...', 'slot', '#e05c98', '#000'], ['Met...', 'slot', '#702026', '#000'],
  ['Bon...', 'drw', '#222', '#000'],
];

const MetalSwatch = styled.span`
  flex: none;
  width: 10px;
  height: 10px;
  background: #300708;
  border: 2px solid #541012;
  outline: 1px solid #222;
`;

const Layers = () => (
  <LayerWindow>
    <Dock title="Layers" />
    <LayerModes>
      {['AV', 'NV', 'AS', 'NS'].map(m => <ModeButton key={m}>{m}</ModeButton>)}
    </LayerModes>
    <FieldRow>
      <Select label="Current layer" value="Metal2 drawing" icon={<MetalSwatch />} />
      <CaretButton aria-label="Layer options"><Caret /></CaretButton>
    </FieldRow>
    <FieldRow>
      <Select label="Layer filter" value="All Valid Layers" icon={<Icon name="filter" size={10} />} />
      <RoundButton aria-label="Collapse">«</RoundButton>
    </FieldRow>
    <CheckLabel><Check type="checkbox" />Used Layers Only</CheckLabel>
    <FieldRow>
      <Search />
      <CaretButton aria-label="Search options"><Caret /></CaretButton>
    </FieldRow>
    <LayerBody>
      <LayerTable>
        <colgroup>
          <Column $w={11} /><Column $w={28} /><Column $w={29} /><Column $w={14} /><Column $w={14} />
        </colgroup>
        <thead>
          <tr><th aria-label="Sort" /><th>Layer</th><th>Purp...</th><th>V</th><th>S</th></tr>
        </thead>
        <tbody>
          {layers.map(([name, purpose, edge, core], i) => (
            <LayerRow key={i} $current={i === 0}>
              <td><Swatch $edge={edge} $core={core} /></td>
              <td>{name}</td>
              <td>{purpose}</td>
              <td><Check type="checkbox" defaultChecked aria-label={`${name} visible`} /></td>
              <td><Check type="checkbox" defaultChecked aria-label={`${name} selectable`} /></td>
            </LayerRow>
          ))}
        </tbody>
      </LayerTable>
      <ScrollTrack>
        <ScrollButton aria-label="Scroll up" />
        <ScrollThumb />
        <ScrollButton $down aria-label="Scroll down" />
      </ScrollTrack>
    </LayerBody>
  </LayerWindow>
);

/* ---------- status and command lines ---------- */

const StatusBar = styled.footer`
  height: 14px;
  display: grid;
  grid-template-columns: 1fr auto 1fr;
  align-items: center;
  padding: 0 8px;
  background: linear-gradient(#dedede, #c4c4c4);
  border-bottom: 1px solid #999;
  span:last-child { text-align: right; }
`;
const CommandBar = styled.div`
  height: 14px;
  display: flex;
  align-items: center;
  background: #f0f0f0;
  border-bottom: 1px solid #777;
`;
const LineCount = styled.span`
  width: 30px;
  align-self: stretch;
  padding-left: 1px;
  line-height: 14px;
  background: #f6d2d2;
  border-right: 1px solid #888;
  color: #7c3636;
`;
const Prompt = styled.label`
  padding: 0 6px;
`;
const CommandInput = styled.input`
  flex: 1;
  outline: none;
`;
const CommandLabel = styled.span`
  padding: 0 6px 0 5px;
  border-left: 1px solid #888;
  border-right: 4px solid #a5a5a5;
`;

/* Menu labels with the position of their mnemonic letter. */
const menus: [string, number][] = [
  ['Launch', 0], ['File', 0], ['Edit', 0], ['View', 0], ['Create', 0], ['Verify', 4], ['Connectivity', 2], ['Options', 0],
  ['Tools', 0], ['Window', 0], ['Assura', 4], ['Optimize', 4], ['Place', 0], ['Floorplan', 7], ['Route', 0], ['Help', 0],
];
const tasks: [string, string][] = [
  ['terminalPale', '[buet@cadence:~]'], ['script', '[virtuoso]'], ['win', 'Cadence Library ...'],
  ['gate', 'nor_gate'], ['gateLight', 'nor_gate'], ['win', 'Layers'],
];
const windowControls = [
  ['Minimize', 'M1 6.5h5'],
  ['Maximize', 'M2 2.5h4v3.5h-4zM2 3h4'],
  ['Close', 'M1.5 1.5l5 5M6.5 1.5l-5 5'],
];

export default function App() {
  return (
    <Page>
      <GlobalStyle />
      <DeskPanel>
        <DeskMenu><Icon name="apps" />Applications</DeskMenu>
        <DeskMenu>Places</DeskMenu>
        <DeskMenu>System</DeskMenu>
        <Launcher aria-label="Terminal"><Icon name="terminal" size={13} /></Launcher>
        <Tasks>
          {tasks.map(([icon, name], i) => (
            <Task key={i} $active={i === 4}><Icon name={icon} size={10} />{name}</Task>
          ))}
        </Tasks>
        <Clock>3:50 PM</Clock>
        <Tray><Icon name="sun" /><Icon name="net" /></Tray>
        <User>buet</User>
      </DeskPanel>

      <TitleBar>
        <Icon name="tool" size={10} />
        <Title>Virtuoso® Layout Suite XL Editing: my_lib nor_gate layout</Title>
        <WinButtons>
          {windowControls.map(([label, d]) => (
            <WinButton key={label} aria-label={label}>
              <Svg width={8} height={8} viewBox="0 0 8 8"><path d={d} fill="none" stroke="#e8e8e8" strokeWidth={1.3} /></Svg>
            </WinButton>
          ))}
        </WinButtons>
      </TitleBar>

      <MenuBar>
        {menus.map(([m, k]) => (
          <MenuItem key={m}>{m.slice(0, k)}<u>{m[k]}</u>{m.slice(k + 1)}</MenuItem>
        ))}
        <Logo>c<LogoBar>a</LogoBar>dence</Logo>
      </MenuBar>

      <Bar $h={25} $drop>
        <Handle />
        <Tools width={43} names={['folder', 'save']} />
        <Handle />
        <Tools width={43} names={['undo', 'redo']} />
        <Sep />
        <Tools width={151} names={['move', 'copy', 'stretch', 'del', 'prop', 'info', 'align']} />
        <Sep />
        <Tools width={26} names={['spin']} />
        <More aria-label="More edit tools">»</More>
        <Handle />
        <Tools width={172} names={['wire', 'abc', 'pin', 'select', 'path', 'shape', 'group', 'cluster']} />
        <Spacer $w={113} />
        <Handle />
        <Tools width={20} names={['zoom']} />
        <More $w={12} aria-label="More view tools">»</More>
        <Handle />
        <span>Workspace:</span>
        <Spacer $w={1} />
        <Select label="Workspace" value="Classic" w={94} />
        <Tools width={43} names={['wsSave', 'wsDel']} />
      </Bar>

      <Bar $h={22}>
        <Handle />
        <Tools width={86} names={['pick', 'chain', 'stack', 'dots']} on={['chain', 'stack']} />
        <Sep />
        <Tools width={86} names={['probe', 'warn', 'marker', 'edit']} on={['edit']} />
        <Tools width={20} names={['part']} />
        <CaretButton aria-label="Partial select options"><Caret /></CaretButton>
        <Tools width={20} names={['bulb']} />
        <Sep $m={2} />
        <Tools width={21} names={['eye']} />
        <CountInput aria-label="Stop level" defaultValue="32" />
        <Sep $m={2} />
        <More $w={14} aria-label="More options">»</More>
        <Handle />
        <Readout>(F)Select:0Sel(N):0Sel(I):0Sel(O):0</Readout>
        <Sep />
        <Readout>X:2.0100Y:2.0200dX:1.0800dY:0.1800Dist:1.0949Cmd:</Readout>
      </Bar>

      <Main>
        <Navigator />
        <CanvasFrame>
          <Canvas />
          <Layers />
        </CanvasFrame>
      </Main>

      <Bar $h={22}>
        <Handle />
        <Tools
          width={320}
          names={['tree', 'rail', 'target', 'ring', 'branch', 'cross', 'blocks', 'folderX', 'ladder', 'flow', 'fCross', 'fShift', 'fDiag', 'fOut', 'fSwap']}
        />
      </Bar>
      <Bar $h={21}>
        <Handle />
        <Tools
          width={256}
          names={['links', 'board', 'stamp', 'find', 'clip', 'mail', 'pair', 'tri', 'note', 'quad', 'map', 'burst']}
        />
        <More $w={20} aria-label="More tools">»</More>
        <Handle />
        <Tools width={42} names={['db', 'grid']} />
      </Bar>

      <StatusBar>
        <span>mouse L: mouseSingleSelectPt() _leiLMBPress()</span>
        <span>M: leHiQuickAlign()</span>
        <span>R: _lxHiMousePopUp()</span>
      </StatusBar>
      <CommandBar>
        <LineCount>32(50)</LineCount>
        <Prompt htmlFor="command">&gt;</Prompt>
        <CommandInput id="command" />
        <CommandLabel>Cmd:</CommandLabel>
      </CommandBar>
    </Page>
  );
}
